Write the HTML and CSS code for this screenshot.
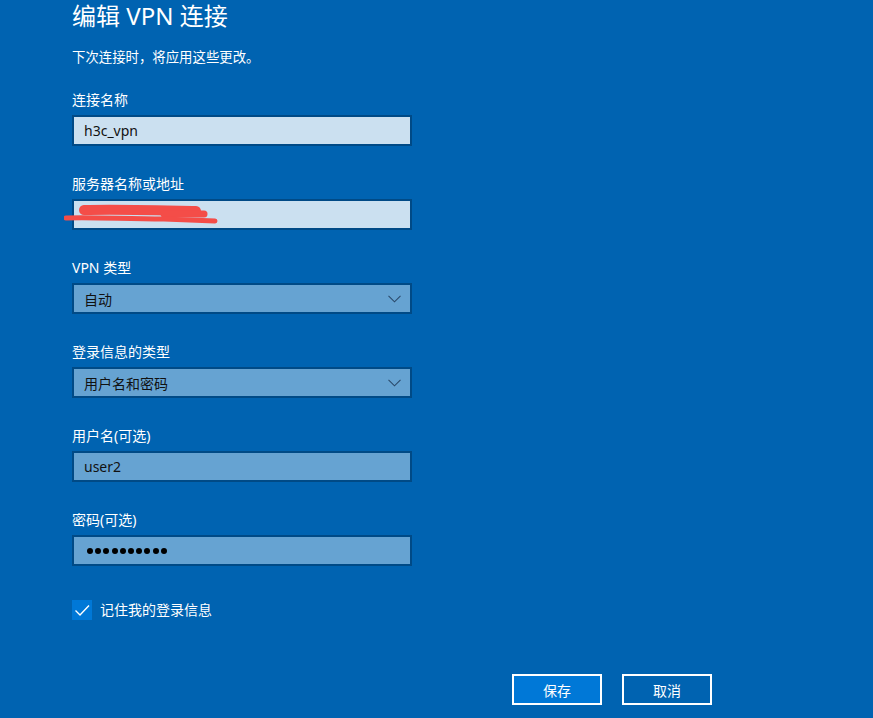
FILE: index.html
```html
<!DOCTYPE html>
<html lang="zh-CN">
<head>
  <meta charset="utf-8">
  <title>编辑 VPN 连接</title>
  <link rel="stylesheet" href="styles.css">
</head>

<body>
  <main class="dialog">
    <h1>编辑 VPN 连接</h1>
    <p class="hint">下次连接时，将应用这些更改。</p>

    <div class="field">
      <label>连接名称</label>
      <div class="box text">h3c_vpn</div>
    </div>

    <div class="field">
      <label>服务器名称或地址</label>
      <div class="box text redacted">
        <svg class="scribble" width="160" height="24" viewBox="0 0 160 24">
          <path d="M20 8 C50 7 90 8 132 9" stroke="#f44d48" stroke-width="10" stroke-linecap="round" fill="none"/>
          <path d="M100 12 L140 12" stroke="#f44d48" stroke-width="7" stroke-linecap="round" fill="none"/>
          <path d="M2 16 C30 15 60 17 100 17 L151 19" stroke="#f44d48" stroke-width="5" stroke-linecap="round" fill="none"/>
        </svg>
      </div>
    </div>

    <div class="field">
      <label>VPN 类型</label>
      <div class="box select">
        <span>自动</span>
        <svg class="chevron" width="13" height="8" viewBox="0 0 13 8"><polyline points="0.5,0.8 6.5,6.8 12.5,0.8" fill="none" stroke="#2b4a6b" stroke-width="1.1"/></svg>
      </div>
    </div>

    <div class="field">
      <label>登录信息的类型</label>
      <div class="box select">
        <span>用户名和密码</span>
        <svg class="chevron" width="13" height="8" viewBox="0 0 13 8"><polyline points="0.5,0.8 6.5,6.8 12.5,0.8" fill="none" stroke="#2b4a6b" stroke-width="1.1"/></svg>
      </div>
    </div>

    <div class="field">
      <label>用户名(可选)</label>
      <div class="box select">user2</div>
    </div>

    <div class="field">
      <label>密码(可选)</label>
      <div class="box select dots">
        <i></i><i></i><i></i><i></i><i></i><i></i><i></i><i></i><i></i><i></i>
      </div>
    </div>

    <div class="remember">
      <span class="check">
        <svg width="20" height="20" viewBox="0 0 20 20"><polyline points="3.5,10.5 8,15 17,5.5" fill="none" stroke="#fff" stroke-width="1.4"/></svg>
      </span>
      <span>记住我的登录信息</span>
    </div>

    <div class="actions">
      <button class="primary">保存</button>
      <button>取消</button>
    </div>
  </main>
</body>
</html>
```

FILE: styles.css
```css
*,
*::before,
*::after {
  box-sizing: border-box;
}

html {
  height: 100%;
}
body {
  margin: 0;
  height: 100%;
  background: #0063b1;
  color: #fff;
  font-family: "Noto Sans", "Noto Sans CJK SC", sans-serif;
  overflow: hidden;
}

.dialog {
  padding-left: 72px;
  height: 100%;
  display: flex;
  flex-direction: column;
}

h1 {
  margin: 0;
  font-size: 24px;
  font-weight: 400;
  line-height: 32px;
}

.hint {
  margin: 15px 0 23px;
  font-size: 13.4px;
  line-height: 20px;
}

.field {
  width: 340px;
  margin-bottom: 28px;
}
.field label {
  display: block;
  font-size: 14px;
  line-height: 20px;
  margin-bottom: 5px;
}

.box {
  position: relative;
  height: 31px;
  border: 2px solid #004a86;
  padding: 0 9px 0 10px;
  display: flex;
  align-items: center;
  justify-content: space-between;
  font-size: 14px;
  color: #111;
}
.box.text {
  background: #cbe0f0;
}
.box.select {
  background: #66a3d2;
}

.chevron {
  margin-top: 1px;
}

.scribble {
  position: absolute;
  left: -10px;
  top: 1px;
}

.dots {
  justify-content: flex-start;
  gap: 2.2px;
  padding-left: 13px;
}
.dots i {
  width: 6px;
  height: 6px;
  border-radius: 50%;
  background: #000;
}

.remember {
  margin-top: 6px;
  display: flex;
  align-items: center;
  gap: 8px;
  font-size: 14px;
  line-height: 20px;
}
.check {
  width: 20px;
  height: 20px;
  background: #0078d7;
  display: flex;
}

.actions {
  margin-top: 54px;
  width: 640px;
  display: flex;
  justify-content: flex-end;
  gap: 20px;
}
.actions button {
  width: 90px;
  height: 31px;
  border: 2px solid #fff;
  background: transparent;
  color: #fff;
  font-family: inherit;
  font-size: 14px;
}
.actions button.primary {
  background: #0078d7;
}
```
